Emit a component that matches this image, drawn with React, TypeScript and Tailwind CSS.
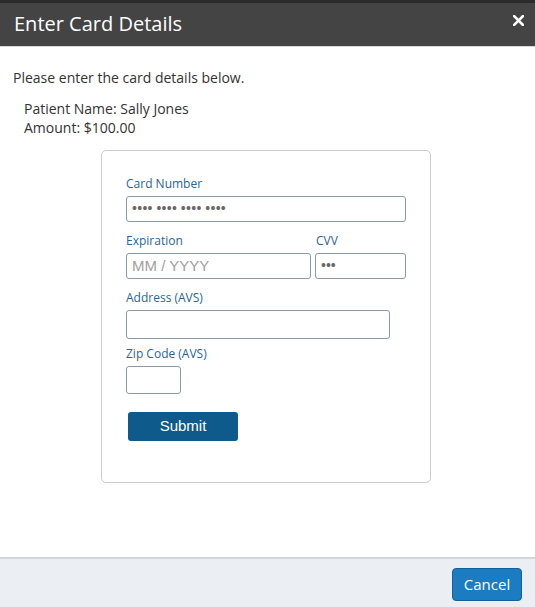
import React from "react"

const labelCls = "block text-[12px] leading-[14px] text-[#2a6496] mb-[5px]"
const inputCls =
  "block border border-[#8a9aa8] rounded-[3px] bg-white px-[5px] text-[13px] text-[#555] outline-none"

export default function App() {
  return (
    <div
      className="w-[535px] h-[607px] flex flex-col bg-white overflow-hidden"
      style={{ fontFamily: '"Open Sans", "Noto Sans", sans-serif' }}
    >
      {/* header */}
      <div className="h-[46px] bg-[#444444] border-t-[3px] border-[#2b2b2b] flex items-center justify-between pl-[14px] pr-[11px]">
        <h1 className="text-[20px] text-white leading-none -mt-[2px]">Enter Card Details</h1>
        <svg width="11" height="11" viewBox="0 0 11 11" className="-mt-[9px]">
          <path d="M1 1L10 10M10 1L1 10" stroke="white" strokeWidth="2.6" strokeLinecap="square" />
        </svg>
      </div>
      <div className="h-px bg-[#d9d9d9]" />

      {/* body */}
      <div className="flex-1 px-[13px] pt-[21px] text-[#333]">
        <p className="text-[14px] leading-[20px]">Please enter the card details below.</p>
        <div className="pl-[11px] mt-[11px] text-[14px] leading-[19px]">
          <div>Patient Name: Sally Jones</div>
          <div>Amount: $100.00</div>
        </div>

        <div className="ml-[88px] mt-[13px] w-[330px] h-[333px] border border-[#cccccc] rounded-[5px] pl-[24px] pt-[26px]">
          <label className={labelCls}>Card Number</label>
          <div className={`${inputCls} w-[280px] h-[26px] flex items-center text-[#666] text-[11px] tracking-[0.3px] font-bold`}>
            •••• •••• •••• ••••
          </div>

          <div className="flex gap-[4px] mt-[12px]">
            <div>
              <label className={labelCls}>Expiration</label>
              <div
                className={`${inputCls} w-[185px] h-[26px] flex items-center text-[15px] text-[#a0a0a0]`}
                style={{ fontFamily: '"Liberation Sans", Arial, sans-serif' }}
              >
                MM / YYYY
              </div>
            </div>
            <div>
              <label className={`${labelCls} pl-[1px]`}>CVV</label>
              <div className={`${inputCls} w-[91px] h-[26px] flex items-center text-[#666] text-[11px] font-bold`}>•••</div>
            </div>
          </div>

          <label className={`${labelCls} mt-[12px]`}>Address (AVS)</label>
          <div className={`${inputCls} w-[264px] h-[29px]`} />

          <label className={`${labelCls} mt-[8px]`}>Zip Code (AVS)</label>
          <div className={`${inputCls} w-[55px] h-[28px]`} />

          <button
            className="mt-[18px] ml-[2px] w-[110px] h-[29px] rounded-[3px] bg-[#0e5a8a] text-white text-[15px]"
            style={{ fontFamily: '"Liberation Sans", Arial, sans-serif' }}
          >
            Submit
          </button>
        </div>
      </div>

      {/* footer */}
      <div className="h-[50px] border-t-2 border-[#d4d8dc] bg-[#ebeff3] flex items-center justify-end pr-[13px]">
        <button className="w-[70px] h-[33px] mt-[2px] rounded-[4px] bg-[#1b7cc1] border border-[#16609a] text-white text-[15px]">
          Cancel
        </button>
      </div>
    </div>
  )
}
